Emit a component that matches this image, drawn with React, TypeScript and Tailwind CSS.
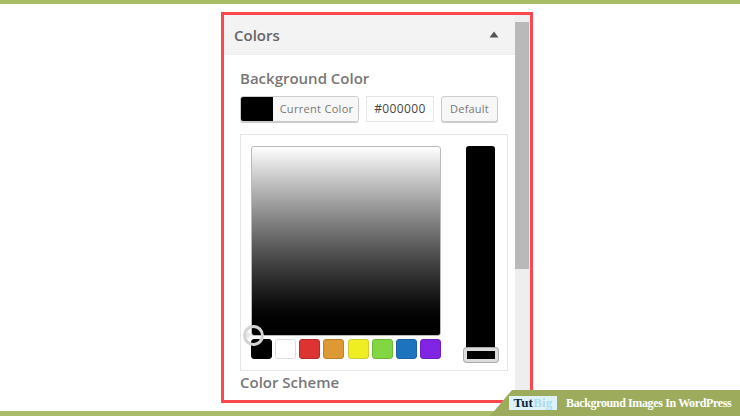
import React from 'react';

const swatches = [
  'bg-[#000000] border-[#000000]',
  'bg-[#ffffff] border-[#dddddd]',
  'bg-[#dd3333] border-[#bb2a2a]',
  'bg-[#dd9933] border-[#bb8228]',
  'bg-[#eeee22] border-[#cccc33]',
  'bg-[#81d742] border-[#6db838]',
  'bg-[#1e73be] border-[#1a62a2]',
  'bg-[#8224e3] border-[#6f1fc1]',
];

const App: React.FC = () => {
  return (
    <div className="relative flex h-[416px] w-[740px] flex-col overflow-hidden bg-white font-['Open_Sans',sans-serif]">
      <div className="h-1 shrink-0 bg-[#a9bc68]" />

      <div className="ml-[221px] mt-2 flex h-[391px] w-[312px] shrink-0 border-[3px] border-[#f9484f] bg-white">
        <div className="flex min-w-0 flex-1 flex-col">
          {/* Section header */}
          <div className="flex h-[40px] shrink-0 items-center justify-between border-b border-[#eeeeee] bg-[#f3f3f3] pl-[10px] pr-[16px]">
            <span className="text-[15px] font-semibold leading-5 text-[#666666]">Colors</span>
            <svg width="10" height="7" viewBox="0 0 10 7" className="text-[#555555]">
              <path d="M5 0.5 9.5 6.5H0.5Z" fill="currentColor" />
            </svg>
          </div>

          <div className="flex flex-1 flex-col pl-4 pr-[7px]">
            <div className="mt-[13px] text-[15px] font-semibold leading-5 text-[#777777]">Background Color</div>

            {/* Colour controls */}
            <div className="mt-[8px] flex h-[26px] items-stretch">
              <div className="flex w-[119px] overflow-hidden rounded-[3px] border border-[#cccccc] shadow-[0_1px_0_#cccccc]">
                <div className="w-[32px] bg-black" />
                <div className="flex flex-1 items-center justify-center whitespace-nowrap bg-[#f7f7f7] pl-[2px] text-[11px] tracking-[0.3px] text-[#777777]">
                  Current Color
                </div>
              </div>
              <div className="ml-[7px] flex w-[68px] items-center justify-center border border-[#e5e5e5] bg-white text-[12px] tracking-[0.4px] text-[#444444]">
                #000000
              </div>
              <div className="ml-[7px] flex w-[57px] items-center justify-center rounded-[3px] border border-[#cccccc] bg-[#f7f7f7] text-[11px] tracking-[0.2px] text-[#777777] shadow-[0_1px_0_#cccccc]">
                Default
              </div>
            </div>

            {/* Iris picker */}
            <div className="relative mt-3 flex h-[237px] w-[268px] justify-between border border-[#e5e5e5] pb-[10px] pl-[10px] pr-[12px] pt-[11px]">
              <div className="flex w-[190px] flex-col">
                <div className="h-[190px] rounded-[3px] border border-[#bbbbbb] bg-gradient-to-b from-white to-black" />
                <div className="mt-[3px] flex justify-between">
                  {swatches.map((c) => (
                    <div key={c} className={`h-[20px] w-[21px] rounded-[3px] border ${c}`} />
                  ))}
                </div>
                <div className="absolute left-[2px] top-[190px] h-[21px] w-[21px] rounded-full border-[3px] border-[#d4d4d4] bg-transparent">
                  <div className="mt-[3px] h-0 w-0 border-y-[4px] border-l-[6px] border-y-transparent border-l-[#e6e6e6]" />
                </div>
              </div>
              <div className="relative w-[29px] rounded-[3px] bg-black">
                <div className="absolute -left-[2px] top-[202px] h-[14px] w-[34px] rounded-[3px] border-[3px] border-[#dcdcdc] bg-black shadow-[0_0_0_1px_#aaaaaa]" />
              </div>
            </div>

            <div className="mt-[1px] text-[15px] font-semibold leading-5 text-[#777777]">Color Scheme</div>
          </div>
        </div>

        {/* Scrollbar */}
        <div className="flex w-[15px] shrink-0 flex-col bg-[#eeeeee] pt-[7px]">
          <div className="h-[247px] w-[14px] bg-[#b9b9b9]" />
        </div>
      </div>

      <div className="mt-auto h-[5px] shrink-0 bg-[#a9bc68]" />

      {/* Watermark tab */}
      <div className="absolute bottom-0 right-0 flex h-[26px] w-[250px] items-center bg-[#9cac5c] pb-[1px] pl-[19px] [clip-path:polygon(22px_0,100%_0,100%_100%,0_100%)]">
        <div className="flex h-[14px] w-[48px] shrink-0 items-center justify-center bg-[#dff2f7] font-['Liberation_Serif',serif] text-[13px] font-bold leading-none tracking-[0.2px]">
          <span className="text-[#10243c]">Tut</span>
          <span className="text-[#a8dcee]">Big</span>
        </div>
        <span className="ml-[9px] whitespace-nowrap font-['Liberation_Serif',serif] text-[12px] font-bold leading-none tracking-[-0.37px] text-white">
          Background Images In WordPress
        </span>
      </div>
    </div>
  );
};

export default App;
